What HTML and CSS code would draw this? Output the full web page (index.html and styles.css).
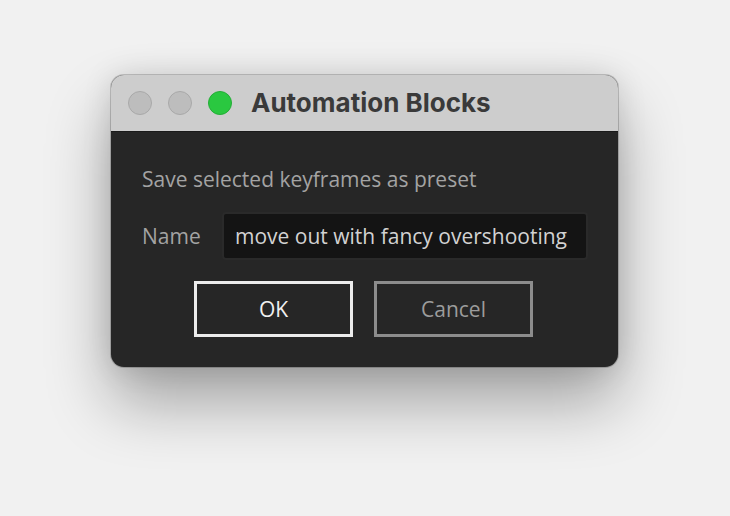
FILE: index.html
```html
<!DOCTYPE html>
<html>
<head>
<meta charset="utf-8">
<link rel="stylesheet" href="styles.css">
</head>
<body>
<div class="desktop">
  <div class="window">
    <div class="titlebar">
      <div class="lights">
        <span class="light gray"></span>
        <span class="light gray"></span>
        <span class="light green"></span>
      </div>
      <div class="title">Automation Blocks</div>
    </div>
    <div class="content">
      <div class="heading">Save selected keyframes as preset</div>
      <div class="row">
        <label class="label">Name</label>
        <div class="input">move out with fancy overshooting</div>
      </div>
      <div class="buttons">
        <div class="btn ok">OK</div>
        <div class="btn cancel">Cancel</div>
      </div>
    </div>
  </div>
</div>
</body>
</html>
```
FILE: styles.css
```css
html, body {
  margin: 0;
  padding: 0;
  width: 730px;
  height: 516px;
  overflow: hidden;
  background: #f1f1f1;
}
.desktop {
  padding: 75px 0 0 111px;
}
.window {
  width: 507px;
  height: 292px;
  border-radius: 13px;
  overflow: hidden;
  background: #262626;
  box-shadow: 0 0 0 1px rgba(0,0,0,0.18), 0 35px 65px rgba(0,0,0,0.33), 0 0 30px rgba(0,0,0,0.12);
  display: flex;
  flex-direction: column;
}
.titlebar {
  height: 57px;
  flex: none;
  background: #cdcdcd;
  border-bottom: 1px solid #1a1a1a;
  display: flex;
  align-items: center;
  box-sizing: border-box;
  padding-left: 17px;
}
.lights {
  display: flex;
  gap: 16px;
}
.light {
  width: 24px;
  height: 24px;
  border-radius: 50%;
  box-sizing: border-box;
}
.light.gray {
  background: #bdbdbd;
  border: 1px solid #a9a9a9;
}
.light.green {
  background: #2ac840;
  border: 1px solid #24ad37;
}
.title {
  margin-left: 19px;
  font-family: "Inter", "Liberation Sans", sans-serif;
  font-weight: 700;
  font-size: 26px;
  color: #3a3a3a;
  margin-top: -1px;
}
.content {
  flex: 1;
  padding: 33px 30px 0 31px;
  font-family: "Open Sans", "Liberation Sans", sans-serif;
  font-size: 21px;
}
.heading {
  color: #a3a3a3;
  line-height: 28px;
}
.row {
  display: flex;
  align-items: center;
  margin-top: 19px;
}
.label {
  color: #a3a3a3;
  width: 80px;
}
.input {
  width: 366px;
  height: 48px;
  box-sizing: border-box;
  background: #141414;
  border: 2px solid #2a2a2a;
  border-radius: 4px;
  color: #d2d2d2;
  padding-left: 11px;
  line-height: 44px;
  white-space: nowrap;
}
.buttons {
  display: flex;
  gap: 21px;
  margin-top: 21px;
  margin-left: 52px;
}
.btn {
  width: 159px;
  height: 56px;
  box-sizing: border-box;
  display: flex;
  align-items: center;
  justify-content: center;
  font-size: 21px;
}
.btn.ok {
  border: 3px solid #ececec;
  color: #f0f0f0;
}
.btn.cancel {
  border: 3px solid #8c8c8c;
  color: #9c9c9c;
}
```
